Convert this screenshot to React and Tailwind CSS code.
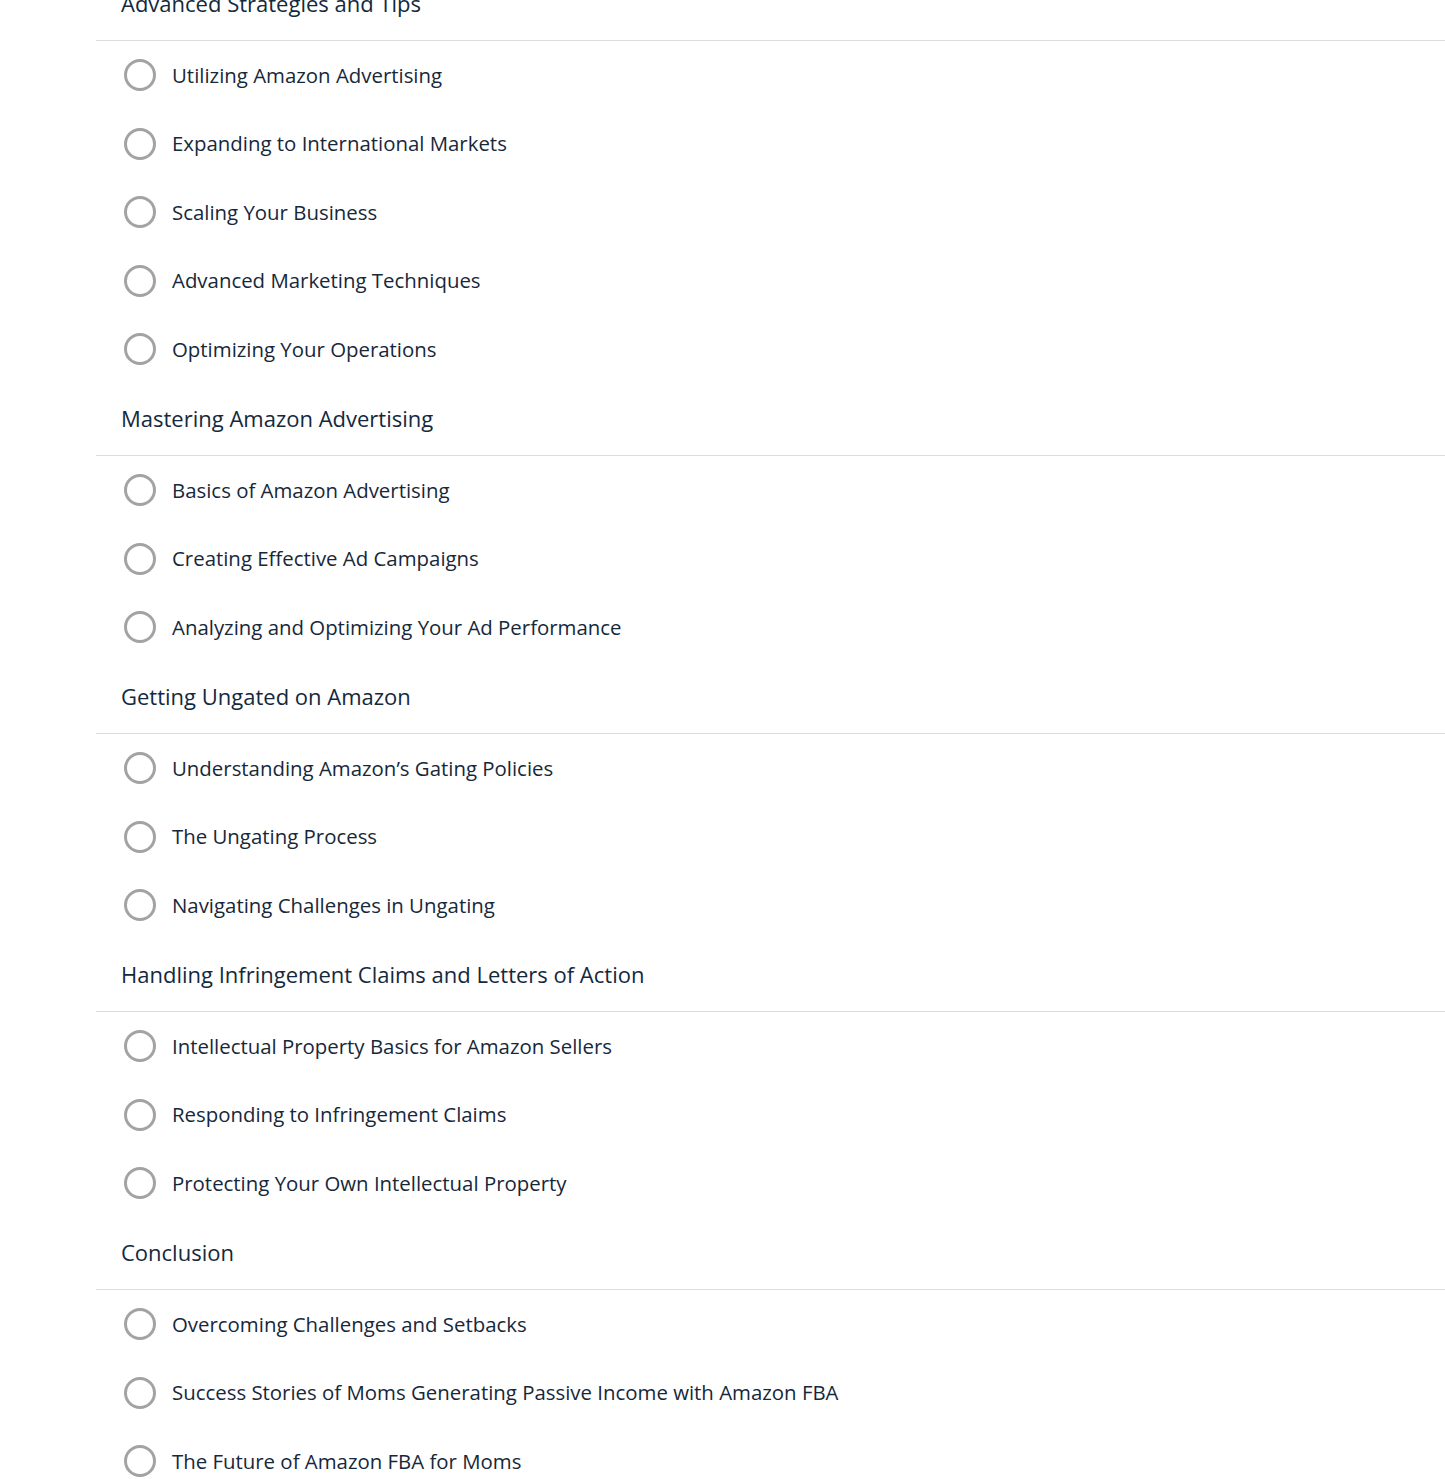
const sections = [
  {
    title: "Advanced Strategies and Tips",
    items: [
      "Utilizing Amazon Advertising",
      "Expanding to International Markets",
      "Scaling Your Business",
      "Advanced Marketing Techniques",
      "Optimizing Your Operations",
    ],
  },
  {
    title: "Mastering Amazon Advertising",
    items: [
      "Basics of Amazon Advertising",
      "Creating Effective Ad Campaigns",
      "Analyzing and Optimizing Your Ad Performance",
    ],
  },
  {
    title: "Getting Ungated on Amazon",
    items: [
      "Understanding Amazon’s Gating Policies",
      "The Ungating Process",
      "Navigating Challenges in Ungating",
    ],
  },
  {
    title: "Handling Infringement Claims and Letters of Action",
    items: [
      "Intellectual Property Basics for Amazon Sellers",
      "Responding to Infringement Claims",
      "Protecting Your Own Intellectual Property",
    ],
  },
  {
    title: "Conclusion",
    items: [
      "Overcoming Challenges and Setbacks",
      "Success Stories of Moms Generating Passive Income with Amazon FBA",
      "The Future of Amazon FBA for Moms",
    ],
  },
];

const Lesson = ({ label }) => {
  return (
    <div className="flex h-[68.5px] items-center gap-4 pl-[28px]">
      <span className="h-[32px] w-[32px] shrink-0 rounded-full border-[3px] border-[#a3a3a3]" />
      <p className="text-[20.4px] text-[#16283a]">{label}</p>
    </div>
  );
};

const App = () => {
  return (
    <div
      className="min-h-screen overflow-hidden bg-white pl-[96px]"
      style={{ fontFamily: "'Open Sans', 'Noto Sans', sans-serif" }}
    >
      <div className="-mt-[31.5px]">
        {sections.map((section) => (
          <div key={section.title}>
            <div className="flex h-[72.5px] items-center border-b border-[#dcdcdc] pb-[1px] pl-[25px]">
              <h2 className="text-[22px] text-[#13293d]">{section.title}</h2>
            </div>
            {section.items.map((item) => (
              <Lesson key={item} label={item} />
            ))}
          </div>
        ))}
      </div>
    </div>
  );
};

export default App;
